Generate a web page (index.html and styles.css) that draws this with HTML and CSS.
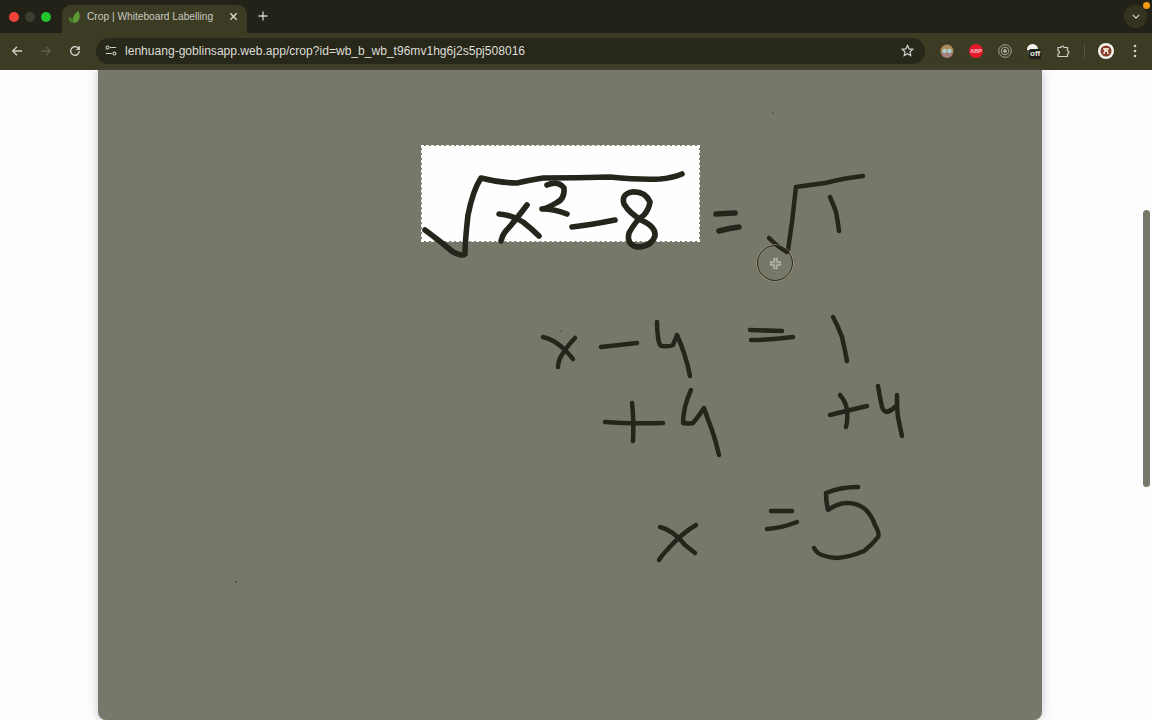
FILE: index.html
```html
<!DOCTYPE html>
<html lang="en">
<head>
<meta charset="utf-8">
<title>Crop | Whiteboard Labelling</title>
<link rel="stylesheet" href="styles.css">
</head>
<body>
<div class="browser">
  <header class="tabstrip">
    <div class="lights">
      <span class="light red"></span><span class="light dim"></span><span class="light green"></span>
    </div>
    <div class="tab">
      <svg class="favicon" viewBox="0 0 14 14"><path d="M7 13C3 12 4 6 10 1c3 4 2 11-3 12z" fill="#5d9a35"/><path d="M6 13C2 13 0 10 1 7c2 0 4 2 5 6z" fill="#4a7a30"/></svg>
      <span class="tab-title">Crop | Whiteboard Labelling</span>
      <svg class="tab-close" viewBox="0 0 10 10"><path d="M1.5 1.5l7 7M8.5 1.5l-7 7"/></svg>
    </div>
    <svg class="new-tab" viewBox="0 0 10 10"><path d="M5 .5v9M.5 5h9"/></svg>
    <div class="strip-end">
      <div class="tab-search">
        <svg viewBox="0 0 10 6"><path d="M1 1l4 4 4-4"/></svg>
        <span class="update-dot"></span>
      </div>
    </div>
  </header>
  <nav class="toolbar">
    <svg class="tool-icon" viewBox="0 0 14 14"><path d="M13 7H2M7 2L2 7l5 5"/></svg>
    <svg class="tool-icon faded" viewBox="0 0 14 14"><path d="M1 7h11M7 2l5 5-5 5"/></svg>
    <svg class="tool-icon" viewBox="0 0 14 14"><path d="M12 7a5 5 0 1 1-1.6-3.7L12 5M12 1.500V5H8.500"/></svg>
    <div class="omnibox">
      <svg class="tune" viewBox="0 0 14 12"><circle cx="3" cy="2.500" r="1.800"/><path d="M6 2.500h7M1 9.500h7"/><circle cx="11" cy="9.500" r="1.800"/></svg>
      <span class="url">lenhuang-goblinsapp.web.app/crop?id=wb_b_wb_t96mv1hg6j2s5pj508016</span>
      <svg class="star" viewBox="0 0 14 14"><path d="M7 1.500l1.700 3.700 4 .5-3 2.700.8 4L7 10.400l-3.500 2 .8-4-3-2.700 4-.5z"/></svg>
    </div>
    <div class="extensions">
      <svg class="ext" viewBox="0 0 14 14"><circle cx="7" cy="7" r="6.500" fill="#b08a5a"/><path d="M1 8a6 6 0 0 0 12 0z" fill="#a87f78"/><circle cx="4.500" cy="7" r="2.200" fill="#a8d0d0"/><circle cx="9.500" cy="7" r="2.200" fill="#a8d0d0"/></svg>
      <span class="abp">ABP</span>
      <svg class="ext" viewBox="0 0 14 14" fill="none" stroke="#a5a598"><circle cx="7" cy="7" r="6.300"/><circle cx="7" cy="7" r="3.800"/><circle cx="7" cy="7" r="1.500" fill="#a5a598"/></svg>
      <div class="off-ext">
        <span class="off-dome"></span>
        <span class="off-label">off</span>
      </div>
      <svg class="ext puzzle" viewBox="0 0 14 14"><path d="M2 3.500h3a1.500 1.500 0 0 1 3 0h3.500V7a1.500 1.500 0 0 1 0 3v2.500H2V10a1.500 1.500 0 0 0 0-3z"/></svg>
      <span class="sep"></span>
      <svg class="avatar" viewBox="0 0 16 16"><circle cx="8" cy="8" r="8" fill="#f4f4f0"/><circle cx="8" cy="8" r="5.500" fill="#8a3a28"/><path d="M5 5h6l-1 3 1 3H9V9H7v2H5l1-3z" fill="#e8d8c8"/></svg>
      <svg class="kebab" viewBox="0 0 4 14"><circle cx="2" cy="2" r="1.300"/><circle cx="2" cy="7" r="1.300"/><circle cx="2" cy="12" r="1.300"/></svg>
    </div>
  </nav>
  <div class="viewport">
    <main class="page">
      <section class="board">
        <div class="selection"></div>
        <svg class="ink" viewBox="98 70 944 650">
          <g class="specks">
            <circle cx="773" cy="113" r=".8"/><circle cx="236" cy="582" r="1"/><circle cx="561" cy="331" r=".8"/>
          </g>
          <g class="stroke-heavy">
            <path d="M425 230Q440 241 453 252Q463 257 465 254Q465 242 468 215Q473 190 481 178Q500 183 517 183Q530 180 543 178Q577 178 610 177Q640 180 660 179Q672 178 682 174"/>
            <path d="M499 214Q512 215 523 222Q532 229 539 236M527 205Q515 221 505 232Q502 236 501 241"/>
            <path d="M547 185Q558 180 564 188Q565 199 556 203Q548 208 542 209Q555 209 567 214"/>
            <path d="M572 227Q590 225 615 220"/>
            <path d="M650 202Q645 191 632 192Q621 194 624 204Q630 214 643 221Q656 227 655 236Q651 247 637 247Q626 244 629 233Q636 220 644 215Q649 209 650 202"/>
            <path d="M716 214L735 213M719 231Q730 228 739 227"/>
          </g>
          <g class="stroke-mid">
            <path d="M769 238Q778 247 787 252M788 250Q790 236 792 222Q794 204 796 187Q810 185 825 183Q845 178 863 176"/>
            <path d="M830 197Q834 206 836 212Q838 222 839 231"/>
            <path d="M543 337Q555 340 565 350Q570 355 573 359M575 338Q567 346 560 358Q558 363 558 367"/>
            <path d="M601 347L637 343"/>
            <path d="M657 322Q657 331 658 337Q659 346 662 346Q670 347 673 345Q675 340 677 335Q681 344 684 353Q688 365 690 376"/>
            <path d="M750 330L782 331M751 340Q770 340 793 337"/>
            <path d="M833 317Q838 326 842 337Q845 350 847 361"/>
            <path d="M605 422Q630 424 663 423M632 403Q634 420 633 441"/>
            <path d="M691 390Q687 399 685 407Q683 416 683 423Q690 424 693 423Q699 416 704 408Q708 420 712 430Q716 442 719 455"/>
            <path d="M830 415Q850 410 867 406M840 395Q846 402 847 410Q848 420 846 427"/>
            <path d="M878 386Q880 398 882 407Q884 412 887 412Q893 410 897 405L897 395Q897 410 898 417Q900 427 902 436"/>
            <path d="M660 527Q673 530 685 545Q690 549 695 553M696 525Q682 533 667 550Q662 555 659 560"/>
            <path d="M771 511L792 511M767 529Q782 528 797 522"/>
            <path d="M858 487Q840 487 826 493Q826 502 828 510Q838 503 847 503Q858 503 865 509Q872 516 875 525Q880 534 878 537Q872 545 864 551Q850 557 837 558Q824 557 818 553Q815 550 814 548"/>
          </g>
        </svg>
        <div class="cursor-ring">
          <svg class="cursor-plus" viewBox="0 0 11 11"><path d="M4 0h3v4h4v3H7v4H4V7H0V4h4z"/></svg>
        </div>
      </section>
    </main>
    <aside class="scrollbar"><div class="thumb"></div></aside>
  </div>
</div>
</body>
</html>
```
FILE: styles.css
```css
* { box-sizing: border-box; }
html, body { margin: 0; height: 100%; overflow: hidden; }
body { font-family: "Liberation Sans", Arial, sans-serif; }

.browser { display: flex; flex-direction: column; width: 1152px; height: 720px; }

.tabstrip {
  height: 33px; flex: none; display: flex; align-items: flex-end;
  padding-left: 9px;
  background: #222219;
}
.lights { display: flex; gap: 6px; align-self: center; }
.light { width: 10px; height: 10px; border-radius: 50%; }
.red { background: #f0443a; }
.dim { background: #3d3d30; }
.green { background: #22c52e; }

.tab {
  margin-left: 11px; width: 185px; height: 28px;
  display: flex; align-items: center; padding: 0 8px 5px 6px;
  border-radius: 9px 9px 0 0;
  background: #3c3c24;
}
.favicon { width: 14px; height: 14px; flex: none; }
.tab-title { margin-left: 5px; font-size: 10.2px; color: #c9c9c0; white-space: nowrap; flex: 1; }
.tab-close { width: 9px; height: 9px; flex: none; margin-right: 1px; fill: none; stroke: #d8d8d0; stroke-width: 1.500; }
.new-tab { width: 10px; height: 10px; margin: 0 0 12px 11px; fill: none; stroke: #d0d0c8; stroke-width: 1.300; }

.strip-end { margin-left: auto; align-self: stretch; padding: 5px 5px 0 0; }
.tab-search {
  position: relative; width: 23px; height: 23px; border-radius: 50%;
  display: flex; align-items: center; justify-content: center;
  background: #33331f;
}
.tab-search svg { width: 8px; height: 5px; fill: none; stroke: #d8d8d0; stroke-width: 1.500; }
.update-dot {
  position: absolute; top: -3px; right: -3px; width: 7px; height: 7px;
  border-radius: 50%; background: #f59a12;
}

.toolbar {
  height: 37px; flex: none; display: flex; align-items: center; padding-left: 11px;
  background: #3c3c24;
}
.tool-icon {
  width: 12px; height: 12px; flex: none; margin-right: 17px; margin-top: -1px;
  fill: none; stroke: #d0d0c8; stroke-width: 1.500;
}
.tool-icon.faded { stroke: #5f5f48; }
.tool-icon:nth-of-type(3) { margin-right: 15px; }

.omnibox {
  width: 829px; height: 26px; flex: none; margin-top: -1px;
  display: flex; align-items: center; padding: 0 11px 0 9px;
  border-radius: 13px; background: #27271a;
}
.tune { width: 12px; height: 11px; flex: none; margin-bottom: 2px; fill: none; stroke: #d0d0c8; stroke-width: 1.200; }
.url { margin-left: 8px; font-size: 12.07px; color: #deded6; white-space: nowrap; flex: 1; }
.star { width: 13px; height: 13px; flex: none; margin-bottom: 2px; fill: none; stroke: #d0d0c8; stroke-width: 1.300; }

.extensions { display: flex; align-items: center; margin-left: 15px; margin-top: -2px; }
.ext { width: 14px; height: 14px; flex: none; margin-right: 15px; }
.abp {
  width: 14px; height: 14px; flex: none; margin-right: 15px; border-radius: 50%;
  background: #e8172c; color: #f4d0d0; font-size: 5.500px; font-weight: 700;
  display: flex; align-items: center; justify-content: center;
}
.off-ext { position: relative; width: 14px; height: 14px; flex: none; margin-right: 15px; }
.off-dome {
  display: block; width: 11px; height: 11px; border-radius: 50%;
  background: linear-gradient(#f4f4ec 55%, #55553a 55%);
}
.off-label {
  position: absolute; left: 2px; top: 5px; padding: 0 1px; border-radius: 2px;
  font-size: 8px; font-weight: 700; line-height: 10px; color: #e8e8e0; background: #20201a;
}
.puzzle { fill: none; stroke: #d0d0c8; stroke-width: 1.200; margin-right: 14px; }
.sep { width: 1px; height: 14px; flex: none; background: #55553e; margin-right: 13px; }
.avatar { width: 16px; height: 16px; flex: none; margin-right: 19px; }
.kebab { width: 4px; height: 14px; flex: none; fill: #d0d0c8; }

.viewport {
  flex: 1; display: flex; min-height: 0;
  background-color: #fdfdff;
  background-image:
    conic-gradient(from 270deg at 1px 1px, #ffffc4 25%, transparent 0),
    conic-gradient(from 270deg at 1px 1px, #ffffc4 25%, transparent 0);
  background-size: 8px 8px;
  background-position: 0 0, 4px 4px;
}
.page { flex: 1; display: flex; justify-content: center; min-width: 0; }
.board {
  position: relative; width: 944px; height: 650px; overflow: hidden;
  border-radius: 0 0 8px 8px;
  background: #78786a;
  box-shadow: 0 0 10px rgba(90, 90, 110, .35);
}
.selection {
  position: absolute; left: 323px; top: 75px; width: 279px; height: 97px;
  border: 1px dashed #ffffff;
  background: #fefeff padding-box;
}
.ink { position: absolute; inset: 0; width: 944px; height: 650px; }
.ink path { fill: none; stroke: #25251c; stroke-linecap: round; stroke-linejoin: round; }
.stroke-heavy path { stroke-width: 5.600; }
.stroke-mid path { stroke-width: 4.500; }
.specks circle { fill: #4a4a40; }

.cursor-ring {
  position: absolute; left: 659px; top: 175px; width: 36px; height: 36px;
  border: 1px solid #2b2b1c; border-radius: 50%;
  box-shadow: 0 0 0 .5px #b8b88a;
  display: flex; align-items: center; justify-content: center;
}
.cursor-plus { width: 11px; height: 11px; fill: #8a8a78; stroke: #e0e0d0; stroke-width: .8; }

.scrollbar { width: 12px; flex: none; padding: 140px 2px 0 3px; }
.thumb {
  height: 277px; border-radius: 4px;
  background: #78786a;
}
```
